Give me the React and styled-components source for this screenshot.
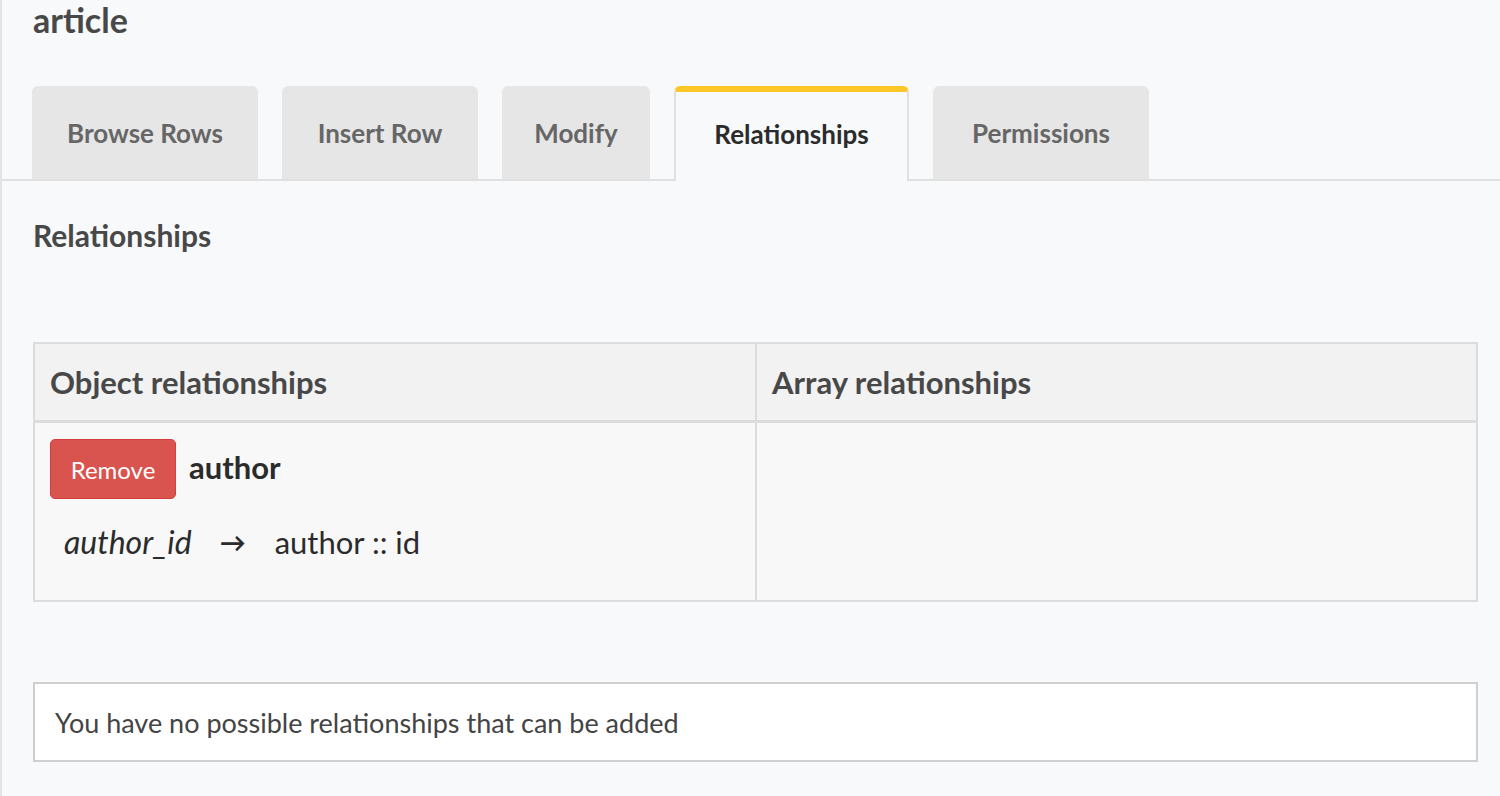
import React from 'react'
import styled, { createGlobalStyle } from 'styled-components'

const Global = createGlobalStyle`
  html, body {
    margin: 0;
    padding: 0;
    background: #f7f9fa;
    font-family: Lato, "Open Sans", sans-serif;
    color: #333;
  }
`

const Page = styled.div`
  min-height: 100vh;
  border-left: 2px solid #e3e3e3;
  box-sizing: border-box;
`

const Title = styled.h2`
  margin: 0;
  padding-left: 31px;
  font-size: 34px;
  line-height: 40px;
  font-weight: 700;
  color: #484848;
`

const TabBar = styled.div`
  display: flex;
  gap: 24px;
  margin-top: 46px;
  padding-left: 30px;
  border-bottom: 2px solid #e0e0e0;
  height: 93px;
  align-items: flex-end;
`

const Tab = styled.div`
  box-sizing: border-box;
  width: ${p => p.$w}px;
  height: ${p => (p.$active ? 95 : 93)}px;
  margin-bottom: ${p => (p.$active ? -2 : 0)}px;
  display: flex;
  align-items: center;
  justify-content: center;
  border-radius: 6px 6px 0 0;
  font-size: 26px;
  font-weight: 700;
  background: ${p => (p.$active ? '#f7f9fa' : '#e6e6e6')};
  color: ${p => (p.$active ? '#2b2b2b' : '#666')};
  border: ${p => (p.$active ? '2px solid #e0e0e0' : 'none')};
  border-top: ${p => (p.$active ? '6px solid #ffc627' : 'none')};
  border-bottom: none;
  padding-bottom: ${p => (p.$active ? 5 : 0)}px;
`

const Content = styled.div`
  padding: 0 22px 0 31px;
`

const SubTitle = styled.h4`
  margin: 36px 0 0;
  font-size: 30px;
  line-height: 36px;
  font-weight: 700;
  color: #484848;
`

const Table = styled.div`
  margin-top: 89px;
  display: grid;
  grid-template-columns: 720px 1fr;
  border: 2px solid #dcdcdc;
`

const HeadCell = styled.div`
  height: 76px;
  display: flex;
  align-items: center;
  padding-left: 15px;
  background: #f2f2f2;
  border-bottom: 3px solid #dcdcdc;
  border-left: ${p => (p.$first ? 'none' : '2px solid #dcdcdc')};
  font-size: 31px;
  font-weight: 700;
  color: #484848;
`

const BodyCell = styled.div`
  height: 177px;
  box-sizing: border-box;
  padding: 16px 15px 0;
  background: #f8f8f8;
  border-left: ${p => (p.$first ? 'none' : '2px solid #dcdcdc')};
`

const RelRow = styled.div`
  display: flex;
  align-items: center;
  gap: 13px;
`

const RemoveButton = styled.button`
  width: 126px;
  height: 60px;
  background: #d9534f;
  border: 1px solid #d43f3a;
  border-radius: 5px;
  color: #fff;
  font-family: inherit;
  font-size: 24px;
  padding: 0;
`

const RelName = styled.span`
  font-size: 31px;
  font-weight: 700;
  color: #2b2b2b;
  margin-top: -4px;
`

const Mapping = styled.div`
  margin-top: 23px;
  padding-left: 14px;
  display: flex;
  align-items: center;
  font-size: 31px;
  color: #2b2b2b;
  em {
    font-style: italic;
    font-size: 32px;
  }
`

const Arrow = styled.span`
  margin: 0 29px 0 28px;
  font-size: 26px;
  font-weight: 700;
`

const Notice = styled.div`
  margin-top: 80px;
  height: 80px;
  box-sizing: border-box;
  display: flex;
  align-items: center;
  padding-left: 20px;
  background: #fff;
  border: 2px solid #cfcfcf;
  font-size: 27px;
  color: #444;
`

const tabs = [
  { label: 'Browse Rows', w: 226 },
  { label: 'Insert Row', w: 196 },
  { label: 'Modify', w: 148 },
  { label: 'Relationships', w: 235, active: true },
  { label: 'Permissions', w: 216 },
]

export default function App() {
  return (
    <Page>
      <Global />
      <Title>article</Title>
      <TabBar>
        {tabs.map(t => (
          <Tab key={t.label} $w={t.w} $active={t.active}>
            {t.label}
          </Tab>
        ))}
      </TabBar>
      <Content>
        <SubTitle>Relationships</SubTitle>
        <Table>
          <HeadCell $first>Object relationships</HeadCell>
          <HeadCell>Array relationships</HeadCell>
          <BodyCell $first>
            <RelRow>
              <RemoveButton>Remove</RemoveButton>
              <RelName>author</RelName>
            </RelRow>
            <Mapping>
              <em>author_id</em>
              <Arrow>→</Arrow>
              <span>author :: id</span>
            </Mapping>
          </BodyCell>
          <BodyCell />
        </Table>
        <Notice>You have no possible relationships that can be added</Notice>
      </Content>
    </Page>
  )
}
